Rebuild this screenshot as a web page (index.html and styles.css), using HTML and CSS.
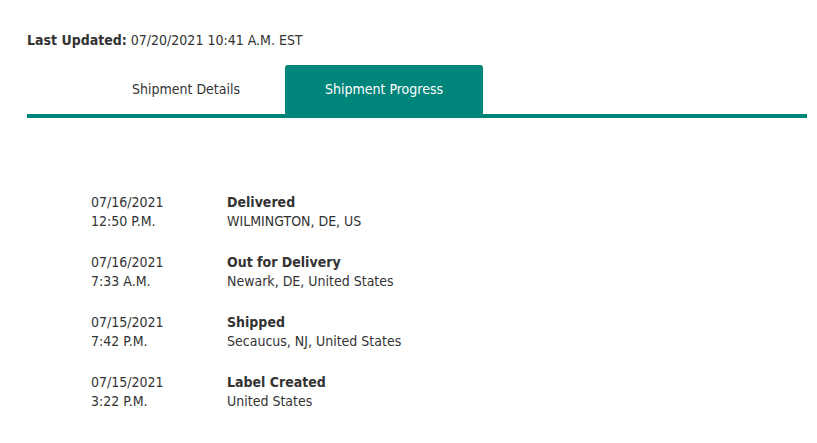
FILE: index.html
```html
<!DOCTYPE html>
<html>
<head>
<meta charset="utf-8">
<link rel="stylesheet" href="styles.css">
</head>
<body>
<div class="page">
  <p class="updated"><strong>Last Updated:</strong> 07/20/2021 10:41 A.M. EST</p>
  <div class="tabs">
    <div class="tab">Shipment Details</div>
    <div class="tab active">Shipment Progress</div>
  </div>
  <ul class="events">
    <li class="event">
      <div class="when"><div>07/16/2021</div><div>12:50 P.M.</div></div>
      <div class="what"><div class="status">Delivered</div><div>WILMINGTON, DE, US</div></div>
    </li>
    <li class="event">
      <div class="when"><div>07/16/2021</div><div>7:33 A.M.</div></div>
      <div class="what"><div class="status">Out for Delivery</div><div>Newark, DE, United States</div></div>
    </li>
    <li class="event">
      <div class="when"><div>07/15/2021</div><div>7:42 P.M.</div></div>
      <div class="what"><div class="status">Shipped</div><div>Secaucus, NJ, United States</div></div>
    </li>
    <li class="event">
      <div class="when"><div>07/15/2021</div><div>3:22 P.M.</div></div>
      <div class="what"><div class="status">Label Created</div><div>United States</div></div>
    </li>
  </ul>
</div>
</body>
</html>
```
FILE: styles.css
```css
html, body {
  margin: 0;
  padding: 0;
  background: #ffffff;
}
body {
  font-family: "DejaVu Sans Condensed", "DejaVu Sans", sans-serif;
  font-size: 14px;
  line-height: 19px;
  color: #333333;
}
.page {
  width: 780px;
  padding: 31px 0 0 27px;
}
.updated {
  margin: 0;
}
.updated strong {
  font-weight: bold;
}
.tabs {
  display: flex;
  margin-top: 15px;
  padding-left: 60px;
  border-bottom: 4px solid #00857a;
}
.tab {
  width: 198px;
  height: 49px;
  display: flex;
  align-items: center;
  justify-content: center;
  color: #333333;
}
.tab.active {
  background: #00857a;
  color: #ffffff;
  border-radius: 3px 3px 0 0;
}
.events {
  list-style: none;
  margin: 75px 0 0 0;
  padding: 0 0 0 64px;
  display: flex;
  flex-direction: column;
  gap: 22px;
}
.event {
  display: flex;
}
.when {
  width: 136px;
}
.status {
  font-weight: bold;
}
```
